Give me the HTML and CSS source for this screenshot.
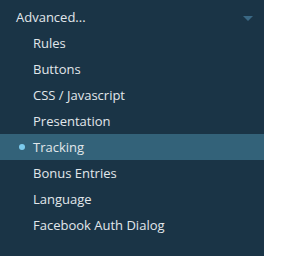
FILE: index.html
```html
<!DOCTYPE html>
<html lang="en">
<head>
    <meta charset="UTF-8">
    <meta name="viewport" content="width=device-width, initial-scale=1.0">
    <title>Advanced Settings</title>
    <link rel="stylesheet" href="styles.css">
</head>
<body>

    <nav class="sidebar">
        <div class="group-head">
            <span>Advanced...</span>
            <span class="caret"></span>
        </div>
        <ul class="sub-menu">
            <li>Rules</li>
            <li>Buttons</li>
            <li>CSS / Javascript</li>
            <li>Presentation</li>
            <li class="active">Tracking</li>
            <li>Bonus Entries</li>
            <li>Language</li>
            <li>Facebook Auth Dialog</li>
        </ul>
    </nav>

</body>
</html>
```

FILE: styles.css
```css
body {
    margin: 0;
    padding: 0;
    background-color: #ffffff;
    font-family: "Open Sans", Arial, sans-serif;
    font-size: 13px;
}

.sidebar {
    width: 264px;
    height: 256px;
    background-color: #1a3446;
    color: #e1e7eb;
    padding-top: 4px;
    box-sizing: border-box;
}

.group-head {
    display: flex;
    justify-content: space-between;
    align-items: center;
    height: 26px;
    padding: 0 11px 0 16px;
}

.caret {
    width: 0;
    height: 0;
    border-left: 5px solid transparent;
    border-right: 5px solid transparent;
    border-top: 5px solid #3a6884;
    margin-top: 3px;
}

.sub-menu {
    list-style: none;
    margin: 0;
    padding: 0;
}

.sub-menu li {
    position: relative;
    height: 26px;
    line-height: 26px;
    padding-left: 33px;
}

.sub-menu li.active {
    background-color: #336279;
}

.sub-menu li.active::before {
    content: "";
    position: absolute;
    left: 19px;
    top: 10px;
    width: 6px;
    height: 6px;
    border-radius: 50%;
    background-color: #7ccbee;
}
```
